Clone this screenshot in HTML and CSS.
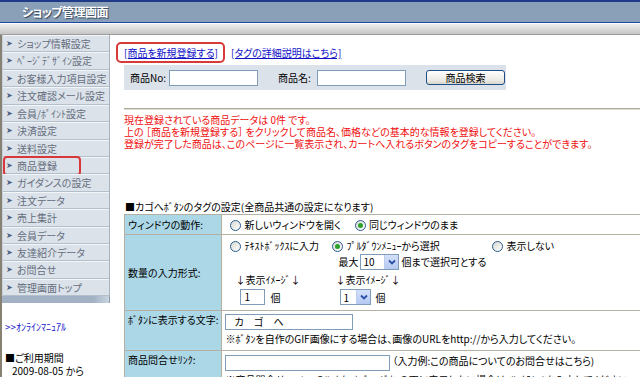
FILE: index.html
```html
<!DOCTYPE html>
<html lang="ja">
<head>
<meta charset="utf-8">
<title>ショップ管理画面</title>
<link rel="stylesheet" href="styles.css">
</head>
<body>
<header class="header">
  <h1 class="title">ショップ管理画面</h1>
</header>
<div class="subbar"></div>
<div class="layout">
  <nav class="side">
    <ul class="menu">
      <li><a>ショップ情報設定</a></li>
      <li><a>ﾍﾟｰｼﾞﾃﾞｻﾞｲﾝ設定</a></li>
      <li><a>お客様入力項目設定</a></li>
      <li><a>注文確認メール設定</a></li>
      <li><a>会員/ﾎﾟｲﾝﾄ設定</a></li>
      <li><a>決済設定</a></li>
      <li><a>送料設定</a></li>
      <li class="active"><a>商品登録</a></li>
      <li><a>ガイダンスの設定</a></li>
      <li><a>注文データ</a></li>
      <li><a>売上集計</a></li>
      <li><a>会員データ</a></li>
      <li><a>友達紹介データ</a></li>
      <li><a>お問合せ</a></li>
      <li><a>管理画面トップ</a></li>
    </ul>
    <div class="menu-foot"></div>
    <a class="manual">&gt;&gt;ｵﾝﾗｲﾝﾏﾆｭｱﾙ</a>
    <div class="period">■ご利用期間<br><span class="date">2009-08-05 から</span></div>
  </nav>
  <main class="main">
    <div class="links">
      <span class="hl-box"><a class="lnk">[商品を新規登録する]</a></span>
      <a class="lnk">[タグの詳細説明はこちら]</a>
    </div>
    <div class="search">
      <label class="s-label">商品No:</label><span class="txt s-in"></span>
      <label class="s-label s-name">商品名:</label><span class="txt s-in"></span>
      <span class="btn">商品検索</span>
    </div>
    <div class="rule"></div>
    <p class="notice">現在登録されている商品データは 0件 です。<br>上の ［商品を新規登録する］ をクリックして商品名、価格などの基本的な情報を登録してください。<br>登録が完了した商品は、このページに一覧表示され、カートへ入れるボタンのタグをコピーすることができます。</p>
    <p class="sec-title">■カゴへﾎﾞﾀﾝのタグの設定(全商品共通の設定になります)</p>
    <table class="tag-table">
      <tr class="r1">
        <th>ウィンドウの動作:</th>
        <td><span class="radio"></span>新しいウィンドウを開く<span class="radio on gap"></span>同じウィンドウのまま</td>
      </tr>
      <tr class="r2">
        <th>数量の入力形式:</th>
        <td>
          <div class="qgrid">
            <div><span class="radio"></span>ﾃｷｽﾄﾎﾞｯｸｽに入力</div>
            <div><span class="radio on"></span>ﾌﾟﾙﾀﾞｳﾝﾒﾆｭｰから選択</div>
            <div><span class="radio"></span>表示しない</div>
            <div></div>
            <div class="max">最大<span class="sel w10"><span class="val">10</span><span class="arr"><svg width="8" height="6" viewBox="0 0 8 6"><path d="M1 1.5 L4 4.5 L7 1.5" fill="none" stroke="#2a4fa8" stroke-width="1.8"/></svg></span></span>個まで選択可とする</div>
            <div></div>
            <div class="img">↓表示ｲﾒｰｼﾞ↓</div>
            <div class="img img2">↓表示ｲﾒｰｼﾞ↓</div>
            <div></div>
            <div class="prev"><span class="txt q-in">1</span>個</div>
            <div class="prev prev2"><span class="sel w1"><span class="val">1</span><span class="arr"><svg width="8" height="6" viewBox="0 0 8 6"><path d="M1 1.5 L4 4.5 L7 1.5" fill="none" stroke="#2a4fa8" stroke-width="1.8"/></svg></span></span>個</div>
            <div></div>
          </div>
        </td>
      </tr>
      <tr class="r3">
        <th>ﾎﾞﾀﾝに表示する文字:</th>
        <td><span class="txt b-in">カ ゴ ヘ</span><div class="note">※ﾎﾞﾀﾝを自作のGIF画像にする場合は、画像のURLをhttp://から入力してください。</div></td>
      </tr>
      <tr class="r4">
        <th>商品問合せﾘﾝｸ:</th>
        <td><span class="txt l-in"></span>（入力例:この商品についてのお問合せはこちら)<div class="note">※商品問合せﾌｫｰﾑへのﾘﾝｸを、ｶｺﾞへﾎﾞﾀﾝの下に表示したい場合は、ﾘﾝｸﾃｷｽﾄを入力してください。</div><div class="note">※ﾘﾝｸ先は商品問合せﾌｫｰﾑになります。</div></td>
      </tr>
    </table>
  </main>
</div>
</body>
</html>
```

FILE: styles.css
```css
html, body {
  margin: 0;
  height: 100%;
  overflow: hidden;
}
body {
  width: 640px;
  background: #fff;
  color: #000;
  font-family: "Noto Sans CJK JP", sans-serif;
  font-size: 10px;
  font-feature-settings: "palt";
}
.header {
  height: 20px;
  background: #8aa0b8;
  border-top: 2px solid #1f3a86;
  border-bottom: 1px solid #1e45a4;
}
.title {
  margin: 0;
  padding-left: 22px;
  font-size: 12px;
  letter-spacing: -0.5px;
  line-height: 20px;
  font-weight: bold;
  color: #fff;
  text-shadow: 1px 1px 1px #34445c;
}
.subbar {
  height: 10px;
  border-top: 1px solid #fff;
  border-bottom: 1px solid #9c9c9c;
  background: linear-gradient(#eeeeee, #c6c6c6);
}
.layout {
  display: flex;
  border-left: 2px solid #878172;
  height: 400px;
}
.side {
  width: 108px;
  flex: none;
}
.menu {
  list-style: none;
  margin: 0;
  padding: 0;
  border-left: 1px solid #c9d2db;
  border-right: 1px solid #a7b3c0;
}
.menu li {
  position: relative;
}
.menu a {
  display: block;
  height: 15.43px;
  line-height: 15.43px;
  padding-left: 14px;
  border-top: 1px solid #f3f6f9;
  border-bottom: 1px solid #b3bfcb;
  background: #dbe2ea;
  color: #656d7c;
  white-space: nowrap;
}
.menu a::before {
  content: "\27A4";
  position: absolute;
  left: 3px;
  font-family: "DejaVu Sans", sans-serif;
  font-size: 8px;
  color: #4d5f80;
}
.menu .active::after {
  content: "";
  position: absolute;
  left: 0;
  top: -1px;
  width: 74px;
  height: 16px;
  border: 2px solid #d8383a;
  border-radius: 4px;
}
.menu-foot {
  height: 7px;
  background: linear-gradient(90deg, #a2b2c4 85%, #c9d4df);
  border-right: 1px solid #8e9cab;
}
.manual {
  display: block;
  margin: 18px 0 0 3px;
  color: #1414c8;
  line-height: 12px;
}
.period {
  margin: 18px 0 0 3px;
  line-height: 13px;
  color: #000;
}
.date {
  padding-left: 7px;
}
.main {
  flex: 1;
  min-width: 0;
  padding: 7px 0 0 6px;
}
.links {
  display: flex;
  align-items: center;
  gap: 6px;
  height: 21px;
}
.hl-box {
  display: inline-block;
  border: 2px solid #d83a3a;
  border-radius: 5px;
  padding: 2px 5px 2px 6px;
  line-height: 13px;
}
.lnk {
  color: #1010c8;
  text-decoration: underline;
  white-space: nowrap;
}
.search {
  display: flex;
  align-items: center;
  width: 376px;
  height: 25px;
  margin: 2px 0 0 8px;
  padding-left: 6px;
  background: #dbe2ea;
  white-space: nowrap;
}
.s-label {
  flex: none;
  width: 33px;
  margin-right: 6px;
}
.s-name {
  margin-left: 20px;
  width: 34px;
  margin-right: 5px;
}
.txt {
  display: inline-block;
  box-sizing: border-box;
  height: 16px;
  border: 1px solid #7f9db9;
  background: #fff;
  line-height: 14px;
  padding-left: 3px;
  vertical-align: middle;
  flex: none;
}
.s-in {
  width: 89px;
}
.btn {
  display: inline-block;
  box-sizing: border-box;
  flex: none;
  width: 79px;
  height: 15px;
  margin-left: 20px;
  border: 1px solid #1f4f86;
  border-radius: 3px;
  background: linear-gradient(#ffffff, #ecebe5 70%, #d8d6cc);
  text-align: center;
  line-height: 13px;
}
.rule {
  height: 0;
  margin: 18px 0 0 8px;
  border-top: 1px solid #aeab9c;
  border-bottom: 1px solid #dedbd0;
}
.notice {
  margin: 4px 0 0 8px;
  color: #f01010;
  line-height: 12px;
  white-space: nowrap;
}
.sec-title {
  margin: 50px 0 0 9px;
  line-height: 13px;
  white-space: nowrap;
}
.tag-table {
  margin: 1px 0 0 8px;
  width: 540px;
  border-collapse: collapse;
  border: 1px solid #b4b1a2;
}
.tag-table th,
.tag-table td {
  border: 1px solid #b4b1a2;
  padding: 0 3px;
  text-align: left;
  font-weight: normal;
  white-space: nowrap;
}
.tag-table th {
  width: 88px;
  background: #abd7e7;
}
.r1 th, .r1 td {
  height: 19px;
}
.r2 th {
  height: 75px;
}
.r3 th, .r4 th {
  vertical-align: top;
  padding-top: 2px;
  line-height: 13px;
}
.r3 td, .r4 td {
  vertical-align: top;
  padding-top: 2px;
  padding-bottom: 2px;
}
.r3 th, .r3 td {
  height: 31px;
}
.radio {
  display: inline-block;
  box-sizing: border-box;
  position: relative;
  width: 11px;
  height: 11px;
  margin: 0 3px 0 5px;
  border: 1px solid #2b5c92;
  border-radius: 50%;
  background: linear-gradient(135deg, #d8d8d0, #ffffff);
  vertical-align: -2px;
}
.radio.on::after {
  content: "";
  position: absolute;
  left: 2px;
  top: 2px;
  width: 5px;
  height: 5px;
  border-radius: 50%;
  background: #2aa22a;
}
.radio.gap {
  margin-left: 14px;
}
.qgrid {
  display: grid;
  grid-template-columns: 102px 160px auto;
  grid-template-rows: 15px 18px 18px 17px;
  align-items: center;
  padding: 2px 0 4px;
}
.max {
  padding-left: 11px;
  display: flex;
  align-items: center;
}
.sel {
  display: inline-flex;
  align-items: center;
  box-sizing: border-box;
  height: 16px;
  border: 1px solid #7f9db9;
  background: #fff;
}
.sel .val {
  padding-left: 2px;
  flex: 1;
}
.sel .arr {
  display: flex;
  align-items: center;
  justify-content: center;
  width: 13px;
  height: 14px;
  background: linear-gradient(#d4e0fa, #b5c9f2);
  border-left: 1px solid #bccdf1;
}
.w10 {
  width: 39px;
  margin: 0 2px 0 2px;
}
.w1 {
  width: 31px;
  margin-right: 4px;
}
.img {
  padding-left: 10px;
}
.img2 {
  padding-left: 8px;
}
.prev {
  display: flex;
  align-items: center;
  padding-left: 15px;
}
.prev2 {
  padding-left: 13px;
}
.q-in {
  width: 25px;
  margin-right: 5px;
}
.b-in {
  width: 128px;
  letter-spacing: 4px;
  padding-left: 8px;
}
.l-in {
  width: 165px;
  margin-right: 2px;
}
.note {
  line-height: 18px;
}
.r4 .note {
  line-height: 11px;
  padding-top: 3px;
}
```
